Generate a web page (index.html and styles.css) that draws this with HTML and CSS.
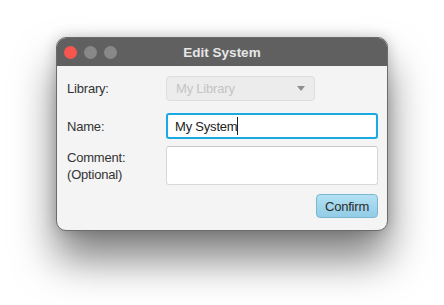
FILE: index.html
```html
<!DOCTYPE html>
<html lang="en">
<head>
  <meta charset="UTF-8" />
  <meta name="viewport" content="width=device-width, initial-scale=1.0" />
  <title>Edit System</title>
  <link rel="stylesheet" href="styles.css">
</head>
<body>
  <div class="window">
    <div class="titlebar">
      <div class="lights">
        <span class="light close"></span>
        <span class="light"></span>
        <span class="light"></span>
      </div>
      <div class="title">Edit System</div>
    </div>
    <div class="content">
      <div class="form">
        <div class="label">Library:</div>
        <div class="select">
          <span>My Library</span>
          <span class="arrow"></span>
        </div>

        <div class="label">Name:</div>
        <div class="field focused">My System<span class="caret"></span></div>

        <div class="label top">Comment:<br>(Optional)</div>
        <div class="field area"></div>
      </div>
      <div class="actions">
        <button class="confirm">Confirm</button>
      </div>
    </div>
  </div>
</body>
</html>
```

FILE: styles.css
```css
* {
  box-sizing: border-box;
  margin: 0;
  padding: 0;
}
html, body {
  height: 100%;
}
body {
  background: #ffffff;
  padding: 37px 0 0 56px;
  font-family: "Liberation Sans", Arial, sans-serif;
  font-size: 13px;
  color: #333333;
}
.window {
  width: 332px;
  border-radius: 10px;
  border: 1px solid #6b6b6b;
  overflow: hidden;
  background: #f4f4f4;
  box-shadow: 0 28px 42px rgba(0, 0, 0, 0.5), 0 0 14px rgba(0, 0, 0, 0.2);
}
.titlebar {
  height: 28px;
  background: #606060;
  display: flex;
  align-items: center;
  position: relative;
}
.lights {
  display: flex;
  gap: 7px;
  padding-left: 7px;
}
.light {
  width: 13px;
  height: 13px;
  border-radius: 50%;
  background: #888888;
}
.light.close {
  background: #f7564f;
}
.title {
  position: absolute;
  left: 0;
  right: 0;
  text-align: center;
  font-weight: bold;
  font-size: 13.5px;
  color: #e6e6e6;
}
.content {
  padding: 10px 9px 12px 10px;
}
.form {
  display: grid;
  grid-template-columns: 99px 1fr;
  align-items: center;
  row-gap: 12px;
}
.label {
  line-height: 17px;
  letter-spacing: -0.2px;
}
.select {
  width: 149px;
  height: 25px;
  border: 1px solid #dedede;
  border-radius: 4px;
  background: #ececec;
  color: #c4c4c4;
  display: flex;
  align-items: center;
  justify-content: space-between;
  padding: 0 9px 0 9px;
  letter-spacing: -0.2px;
}
.arrow {
  width: 0;
  height: 0;
  border-left: 4.5px solid transparent;
  border-right: 4.5px solid transparent;
  border-top: 5px solid #8e8e8e;
}
.field {
  height: 26px;
  background: #ffffff;
  border: 1px solid #d8d8d8;
  border-top-color: #c8c8c8;
  border-radius: 3px;
  display: flex;
  align-items: center;
  padding-left: 8px;
  color: #222222;
  letter-spacing: -0.2px;
}
.field.focused {
  border: 2px solid #19a9e3;
  padding-left: 7px;
}
.caret {
  width: 1px;
  height: 18px;
  background: #222222;
}
.field.area {
  height: 39px;
  margin-top: -5px;
}
.label.top {
  align-self: start;
  margin-top: -2px;
}
.actions {
  display: flex;
  justify-content: flex-end;
  margin-top: 9px;
}
.confirm {
  width: 62px;
  height: 24px;
  font-family: inherit;
  font-size: 13px;
  letter-spacing: -0.2px;
  color: #2b2b2b;
  border: 1px solid #7cb7d2;
  border-radius: 4px;
  background: linear-gradient(180deg, #b3e1f3 0%, #92cce6 100%);
}
```
